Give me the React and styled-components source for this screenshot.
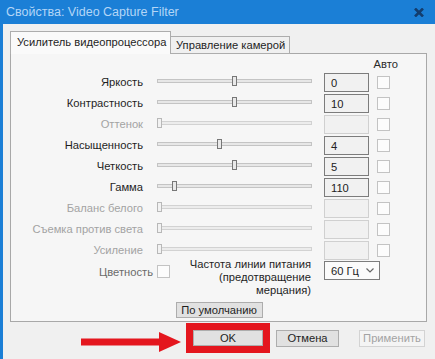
import React from "react";
import styled, { createGlobalStyle } from "styled-components";

const GlobalStyle = createGlobalStyle`
  html, body {
    margin: 0;
    padding: 0;
    background: #f0f0f0;
  }
  body {
    font-family: "Liberation Sans", Arial, sans-serif;
    font-size: 11.2px;
    color: #1e1e1e;
  }
`;

const Window = styled.div`
  width: 435px;
  height: 359px;
  overflow: hidden;
  display: flex;
  flex-direction: column;
  background: #f0f0f0;
`;

const TitleBar = styled.div`
  height: 24px;
  flex: none;
  display: flex;
  align-items: center;
  justify-content: space-between;
  padding: 0 11px 0 6px;
  background: #1b7fd6;
  color: #b4d6f6;
  font-size: 12.5px;
`;

const Frame = styled.div`
  flex: 1;
  border-left: 3px solid #1b7fd6;
  padding: 7px 8px 0 7px;
  display: flex;
  flex-direction: column;
`;

const TabBar = styled.div`
  display: flex;
  align-items: flex-end;
  margin-bottom: -1px;
  position: relative;
  z-index: 1;
`;

const Tab = styled.div`
  width: ${({ $w }) => $w}px;
  height: ${({ $active }) => ($active ? "23px" : "18px")};
  box-sizing: border-box;
  display: flex;
  align-items: center;
  padding: ${({ $active }) => ($active ? "0 0 2px 6px" : "0 0 0 5px")};
  border: 1px solid #adadad;
  border-bottom: ${({ $active }) => ($active ? "none" : "1px solid #adadad")};
  border-left: ${({ $active }) => ($active ? "1px solid #adadad" : "none")};
  background: ${({ $active }) => ($active ? "#fafafa" : "#f0f0f0")};
  white-space: nowrap;
`;

const Panel = styled.div`
  height: 269px;
  box-sizing: border-box;
  border: 1px solid #a8a8a8;
  background: #f6f6f6;
  padding-top: 3px;
  display: flex;
  flex-direction: column;
`;

const HeaderRow = styled.div`
  height: 14px;
  display: flex;
  justify-content: flex-end;
  align-items: center;
  padding-right: 28px;
  color: #2a2a2a;
`;

const Row = styled.div`
  height: 19px;
  margin-top: 2px;
  display: flex;
  align-items: center;
`;

const Label = styled.div`
  width: 132px;
  margin-right: 14px;
  margin-top: -2px;
  text-align: right;
  white-space: nowrap;
  color: ${({ $disabled }) => ($disabled ? "#a3a3a3" : "#1e1e1e")};
`;

const Slider = styled.div`
  width: 155px;
  height: 19px;
  position: relative;
  display: flex;
  align-items: center;
`;

const Track = styled.div`
  width: 100%;
  height: 4px;
  box-sizing: border-box;
  margin-top: -3px;
  border: 1px solid ${({ $disabled }) => ($disabled ? "#d2d2d2" : "#c4c4c4")};
  background: ${({ $disabled }) => ($disabled ? "#ececec" : "#e7e7e7")};
`;

const Thumb = styled.div`
  position: absolute;
  top: 3px;
  width: 5px;
  height: 10px;
  box-sizing: border-box;
  border: 1px solid ${({ $disabled }) => ($disabled ? "#b8b8b8" : "#777777")};
  background: ${({ $disabled }) => ($disabled ? "#f2f2f2" : "#e9e9e9")};
`;

const Edit = styled.div`
  width: 45px;
  height: 19px;
  box-sizing: border-box;
  margin-left: 12px;
  padding-left: 6px;
  display: flex;
  align-items: center;
  border: 1px solid ${({ $disabled }) => ($disabled ? "#d0d0d0" : "#7c7c7c")};
  background: #f1f1f1;
  color: #222;
`;

const Check = styled.div`
  width: 13px;
  height: 13px;
  box-sizing: border-box;
  margin-left: ${({ $gap }) => $gap}px;
  border: 1px solid #c3c3c3;
  background: #fcfcfc;
  flex: none;
`;

const BottomRow = styled.div`
  display: flex;
  align-items: flex-start;
  margin-top: -2px;
`;

const ChromaGroup = styled.div`
  width: 159px;
  margin-top: 7px;
  display: flex;
  justify-content: flex-end;
  align-items: center;
  color: #6a6a6a;
`;

const PowerLabel = styled.div`
  width: 141px;
  text-align: right;
  line-height: 13px;
  color: #1e1e1e;
  white-space: nowrap;
`;

const Select = styled.div`
  width: 56px;
  height: 19px;
  box-sizing: border-box;
  margin: 3px 0 0 13px;
  padding: 0 5px 0 6px;
  display: flex;
  align-items: center;
  justify-content: space-between;
  border: 1px solid #7c7c7c;
  background: #fbfbfb;
`;

const Button = styled.div`
  width: ${({ $w }) => $w}px;
  height: ${({ $h }) => $h || 17}px;
  box-sizing: border-box;
  display: flex;
  align-items: center;
  justify-content: center;
  margin-left: ${({ $ml }) => $ml || 0}px;
  border: 1px solid ${({ $disabled }) => ($disabled ? "#d3d3d3" : "#adadad")};
  background: ${({ $disabled }) => ($disabled ? "#f4f4f4" : "#e1e1e1")};
  color: ${({ $disabled }) => ($disabled ? "#a3a3a3" : "#1e1e1e")};
  white-space: nowrap;
`;

const DefaultButton = styled(Button)`
  align-self: center;
  margin-top: 5px;
  margin-left: 1px;
`;

const Actions = styled.div`
  height: 30px;
  margin-top: 1px;
  padding-right: 2px;
  display: flex;
  align-items: center;
  justify-content: flex-end;
`;

const ArrowMark = styled.svg`
  width: 100px;
  height: 22px;
  align-self: flex-end;
  margin-right: 5px;
  margin-bottom: 1px;
`;

const RedFrame = styled.div`
  border: 7px solid #e4161e;
  display: flex;
`;

const rows = [
  { label: "Яркость", value: "0", pos: 75 },
  { label: "Контрастность", value: "10", pos: 75 },
  { label: "Оттенок", value: "", pos: 0, disabled: true },
  { label: "Насыщенность", value: "4", pos: 60 },
  { label: "Четкость", value: "5", pos: 75 },
  { label: "Гамма", value: "110", pos: 15 },
  { label: "Баланс белого", value: "", pos: 0, disabled: true },
  { label: "Съемка против света", value: "", pos: 0, disabled: true },
  { label: "Усиление", value: "", pos: 0, disabled: true },
];

const CloseIcon = () => (
  <svg width="10" height="9" viewBox="0 0 10 9">
    <path d="M1 0.5 L9 8.5 M9 0.5 L1 8.5" stroke="#133d6e" strokeWidth="2.6" />
  </svg>
);

const Chevron = () => (
  <svg width="8" height="5" viewBox="0 0 8 5">
    <path d="M0.5 0.5 L4 4 L7.5 0.5" stroke="#666" strokeWidth="1.2" fill="none" />
  </svg>
);

export default function App() {
  return (
    <>
      <GlobalStyle />
      <Window>
        <TitleBar>
          <span>Свойства: Video Capture Filter</span>
          <CloseIcon />
        </TitleBar>
        <Frame>
          <TabBar>
            <Tab $active $w={161}>
              Усилитель видеопроцессора
            </Tab>
            <Tab $w={119}>Управление камерой</Tab>
          </TabBar>
          <Panel>
            <HeaderRow>Авто</HeaderRow>
            {rows.map((r) => (
              <Row key={r.label}>
                <Label $disabled={r.disabled}>{r.label}</Label>
                <Slider>
                  <Track $disabled={r.disabled} />
                  <Thumb $disabled={r.disabled} style={{ left: r.pos }} />
                </Slider>
                <Edit $disabled={r.disabled}>{r.value}</Edit>
                <Check $gap={8} />
              </Row>
            ))}
            <BottomRow>
              <ChromaGroup>
                Цветность
                <Check $gap={4} />
              </ChromaGroup>
              <PowerLabel>
                Частота линии питания
                <br />
                (предотвращение
                <br />
                мерцания)
              </PowerLabel>
              <Select>
                60 Гц
                <Chevron />
              </Select>
            </BottomRow>
            <DefaultButton $w={87} $h={16}>
              По умолчанию
            </DefaultButton>
          </Panel>
          <Actions>
            <ArrowMark viewBox="0 0 100 22">
              <rect x="0" y="8.5" width="80" height="7" fill="#e4161e" />
              <polygon points="78,2 100,12 78,22" fill="#e4161e" />
            </ArrowMark>
            <RedFrame>
              <Button $w={70} $h={16}>
                OK
              </Button>
            </RedFrame>
            <Button $w={63} $ml={6}>
              Отмена
            </Button>
            <Button $w={66} $ml={20} $disabled>
              Применить
            </Button>
          </Actions>
        </Frame>
      </Window>
    </>
  );
}
